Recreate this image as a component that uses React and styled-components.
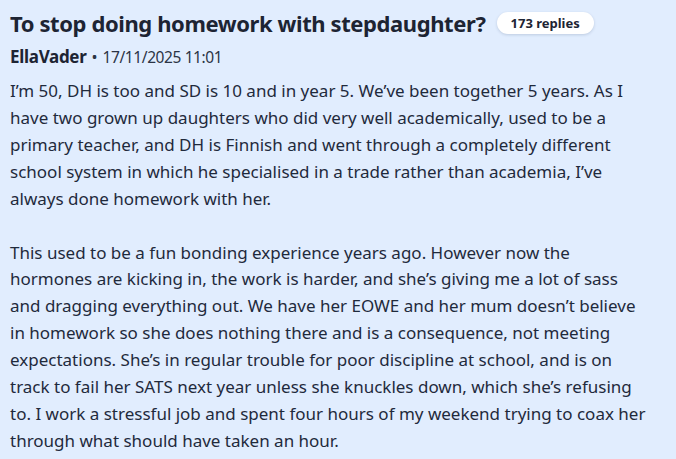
import React from "react";
import styled, { createGlobalStyle } from "styled-components";

const Global = createGlobalStyle`
  html, body { margin: 0; padding: 0; background: #e1edfe; }
  body { font-family: "Noto Sans", "Open Sans", sans-serif; color: #1e2a3b; }
`;

const Page = styled.main`
  padding: 8px 10px 0 10px;
  display: flex;
  flex-direction: column;
`;

const Header = styled.div`
  display: flex;
  align-items: center;
  gap: 11px;
`;

const Title = styled.h1`
  margin: 0;
  font-size: 22px;
  font-weight: 700;
  letter-spacing: -0.4px;
  line-height: 30px;
  color: #1d2433;
`;

const Badge = styled.span`
  background: #ffffff;
  border-radius: 12px;
  padding: 2px 14px;
  font-size: 13px;
  font-weight: 700;
  line-height: 18px;
  color: #1d2433;
  box-shadow: 0 1px 3px rgba(30, 50, 90, 0.18);
`;

const Meta = styled.div`
  margin-top: 8px;
  display: flex;
  align-items: baseline;
  gap: 5px;
  font-size: 16px;
  line-height: 22px;
  color: #2b3445;
`;

const Author = styled.span`
  font-size: 17px;
  font-weight: 700;
  letter-spacing: -0.3px;
  color: #1d2433;
`;

const Stamp = styled.span`
  font-size: 15.5px;
  letter-spacing: -0.4px;
`;

const Para = styled.p`
  margin: 10px 0 0 0;
  font-size: 17px;
  line-height: 26.9px;
  white-space: nowrap;
  color: #1f2a3c;
  & + & { margin-top: 27px; }
`;

const p1 = [
  "I’m 50, DH is too and SD is 10 and in year 5. We’ve been together 5 years. As I",
  "have two grown up daughters who did very well academically, used to be a",
  "primary teacher, and DH is Finnish and went through a completely different",
  "school system in which he specialised in a trade rather than academia, I’ve",
  "always done homework with her.",
];
const p2 = [
  "This used to be a fun bonding experience years ago. However now the",
  "hormones are kicking in, the work is harder, and she’s giving me a lot of sass",
  "and dragging everything out. We have her EOWE and her mum doesn’t believe",
  "in homework so she does nothing there and is a consequence, not meeting",
  "expectations. She’s in regular trouble for poor discipline at school, and is on",
  "track to fail her SATS next year unless she knuckles down, which she’s refusing",
  "to. I work a stressful job and spent four hours of my weekend trying to coax her",
  "through what should have taken an hour.",
];

const Lines = ({ lines }) =>
  lines.map((l, i) => (
    <React.Fragment key={i}>
      {l}
      {i < lines.length - 1 && <br />}
    </React.Fragment>
  ));

export default function App() {
  return (
    <>
      <Global />
      <Page>
        <Header>
          <Title>To stop doing homework with stepdaughter?</Title>
          <Badge>173 replies</Badge>
        </Header>
        <Meta>
          <Author>EllaVader</Author>
          <span>•</span>
          <Stamp>17/11/2025 11:01</Stamp>
        </Meta>
        <Para><Lines lines={p1} /></Para>
        <Para><Lines lines={p2} /></Para>
      </Page>
    </>
  );
}
